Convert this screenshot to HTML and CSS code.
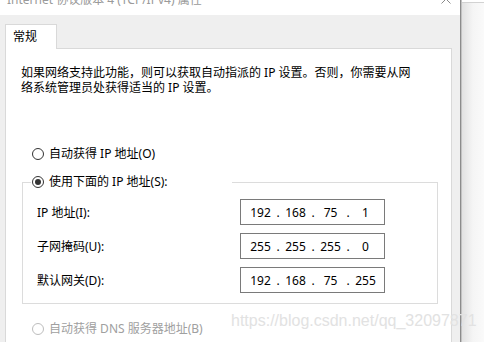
FILE: index.html
```html
<!DOCTYPE html>
<html lang="zh-CN">
<head>
<meta charset="utf-8">
<title>Internet 协议版本 4 (TCP/IPv4) 属性</title>
<link rel="stylesheet" href="styles.css">
</head>
<body>
<div class="screen">
  <div class="dialog">
    <div class="titlebar">
      <span class="title">Internet 协议版本 4 (TCP/IPv4) 属性</span>
      <svg class="close" viewBox="0 0 10 10" width="10" height="10"><path d="M0.5 0.5 L9.5 9.5 M9.5 0.5 L0.5 9.5" stroke="#8a8a8a" stroke-width="1" fill="none"/></svg>
    </div>
    <div class="body">
      <div class="tabs"><div class="tab">常规</div></div>
      <div class="panel">
        <p class="desc">如果网络支持此功能，则可以获取自动指派的 IP 设置。否则，你需要从网<br>络系统管理员处获得适当的 IP 设置。</p>
        <div class="radio-row opt"><span class="radio"></span><span>自动获得 IP 地址(O)</span></div>
        <fieldset class="group">
          <legend class="legend"><div class="radio-row"><span class="radio checked"></span><span>使用下面的 IP 地址(S):</span></div></legend>
          <div class="field-row">
            <span class="label">IP 地址(I):</span>
            <div class="ip"><span class="oct">192</span><span class="dot">.</span><span class="oct">168</span><span class="dot">.</span><span class="oct">75</span><span class="dot">.</span><span class="oct">1</span></div>
          </div>
          <div class="field-row">
            <span class="label">子网掩码(U):</span>
            <div class="ip"><span class="oct">255</span><span class="dot">.</span><span class="oct">255</span><span class="dot">.</span><span class="oct">255</span><span class="dot">.</span><span class="oct">0</span></div>
          </div>
          <div class="field-row">
            <span class="label">默认网关(D):</span>
            <div class="ip"><span class="oct">192</span><span class="dot">.</span><span class="oct">168</span><span class="dot">.</span><span class="oct">75</span><span class="dot">.</span><span class="oct">255</span></div>
          </div>
        </fieldset>
        <div class="radio-row opt dns disabled"><span class="radio"></span><span>自动获得 DNS 服务器地址(B)</span></div>
      </div>
    </div>
  </div>
  <div class="side"><div class="side-inner"></div></div>
  <div class="watermark">https://blog.csdn.net/qq_32097871</div>
</div>
</body>
</html>
```

FILE: styles.css
```css
html, body {
  margin: 0;
  padding: 0;
}

body {
  width: 484px;
  height: 342px;
  overflow: hidden;
  background: #fff;
  font-family: "Noto Sans", "Noto Sans CJK SC", sans-serif;
  font-size: 12px;
  color: #000;
}

.screen {
  position: relative;
  display: flex;
  height: 342px;
}

.dialog {
  width: 460px;
  flex: none;
  display: flex;
  flex-direction: column;
  border-right: 1px solid #8c8c8c;
}

.titlebar {
  height: 15px;
  flex: none;
  background: #fff;
  display: flex;
  justify-content: space-between;
  align-items: flex-start;
  overflow: hidden;
  padding: 0 9px 0 7px;
}

.title {
  line-height: 12px;
  margin-top: -6px;
  color: #9a9a9a;
  white-space: nowrap;
}

.close {
  flex: none;
  margin-top: -6px;
}

.body {
  flex: 1;
  background: #efefef;
  padding: 9px 8px 0 5px;
  display: flex;
  flex-direction: column;
}

.tabs {
  display: flex;
  height: 24px;
  flex: none;
}

.tab {
  position: relative;
  z-index: 1;
  box-sizing: border-box;
  width: 52px;
  height: 25px;
  border: 1px solid #d9d9d9;
  border-bottom: none;
  background: #fff;
  padding-left: 7px;
  line-height: 23px;
}

.panel {
  flex: 1;
  background: #fff;
  border: 1px solid #d9d9d9;
  border-bottom: none;
  padding: 16px 13px 0 15px;
}

.desc {
  margin: 0;
  line-height: 15px;
  white-space: nowrap;
}

.radio-row {
  display: flex;
  align-items: center;
  gap: 5px;
  height: 16px;
  line-height: 16px;
  white-space: nowrap;
}

.opt {
  margin-top: 51px;
  padding-left: 11px;
}

.radio {
  flex: none;
  box-sizing: border-box;
  width: 12px;
  height: 12px;
  border: 1px solid #333;
  border-radius: 50%;
  display: flex;
  align-items: center;
  justify-content: center;
  background: #fff;
}

.radio.checked::after {
  content: "";
  width: 6px;
  height: 6px;
  border-radius: 50%;
  background: #333;
}

.group {
  margin: 12px 0 0 1px;
  padding: 9px 0 10px 8px;
  border: 1px solid #dcdcdc;
  min-width: 0;
}

.legend {
  box-sizing: border-box;
  width: 201px;
  padding: 0 0 0 1px;
  margin: 0;
}

.field-row {
  display: flex;
  align-items: center;
  height: 26px;
  padding-left: 6px;
}

.field-row + .field-row {
  margin-top: 8px;
}

.label {
  width: 203px;
  flex: none;
  white-space: nowrap;
}

.ip {
  box-sizing: border-box;
  width: 145px;
  height: 26px;
  border: 1px solid #7a7a7a;
  display: flex;
  align-items: center;
  padding-left: 6px;
  background: #fff;
}

.oct {
  width: 27px;
  text-align: center;
}

.dot {
  width: 8px;
  text-align: center;
}

.dns {
  margin-top: 17px;
}

.disabled {
  color: #a0a0a0;
}

.disabled .radio {
  border-color: #bdbdbd;
}

.side {
  flex: 1;
  border-left: 1px solid #c2c2c2;
  padding-top: 2px;
  background: #fff;
  display: flex;
}

.side-inner {
  flex: 1;
  border-top: 1px solid #d2d2d2;
  background: linear-gradient(to right, #e2e2e2, #f5f5f5 50%, #fafafa);
}

.watermark {
  position: absolute;
  left: 231px;
  top: 313px;
  font-family: "Liberation Sans", Arial, sans-serif;
  font-size: 16px;
  line-height: 16px;
  color: #e2e2e2;
  white-space: nowrap;
}
```
